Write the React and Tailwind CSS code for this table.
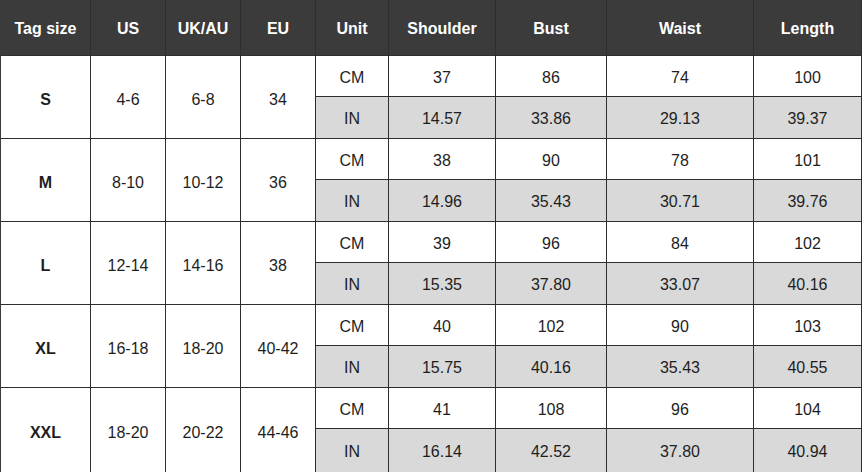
import React from "react";

const headers = ["Tag size", "US", "UK/AU", "EU", "Unit", "Shoulder", "Bust", "Waist", "Length"];

const sizes = [
    {tag: "S", us: "4-6", uk: "6-8", eu: "34", cm: ["37", "86", "74", "100"], inch: ["14.57", "33.86", "29.13", "39.37"]},
    {tag: "M", us: "8-10", uk: "10-12", eu: "36", cm: ["38", "90", "78", "101"], inch: ["14.96", "35.43", "30.71", "39.76"]},
    {tag: "L", us: "12-14", uk: "14-16", eu: "38", cm: ["39", "96", "84", "102"], inch: ["15.35", "37.80", "33.07", "40.16"]},
    {tag: "XL", us: "16-18", uk: "18-20", eu: "40-42", cm: ["40", "102", "90", "103"], inch: ["15.75", "40.16", "35.43", "40.55"]},
    {tag: "XXL", us: "18-20", uk: "20-22", eu: "44-46", cm: ["41", "108", "96", "104"], inch: ["16.14", "42.52", "37.80", "40.94"]},
];

const cell = "flex items-center justify-center border-r border-b border-[#2e2e2e]";

const App = () => {
    return (
        <div className="w-[864px] h-[472px] overflow-hidden bg-white" style={{fontFamily: '"Liberation Sans", Arial, sans-serif'}}>
            <div className="grid w-[862px] border-l border-[#3a3a3a] grid-cols-[90px_75px_75px_75px_73px_107px_111px_147px_108px] grid-rows-[56px_41px_42px_41px_42px_41px_42px_41px_42px_41px_44px] text-[16px] text-[#1e1e1e]">
                {/* header */}
                {headers.map(h => (
                    <div key={h} className={`${cell} bg-[#3b3b3b] text-white font-bold pt-[2px]`}>{h}</div>
                ))}

                {sizes.map(s => (
                    <React.Fragment key={s.tag}>
                        <div className={`${cell} row-span-2 font-bold pt-[5px]`}>{s.tag}</div>
                        <div className={`${cell} row-span-2 pt-[5px]`}>{s.us}</div>
                        <div className={`${cell} row-span-2 pt-[5px]`}>{s.uk}</div>
                        <div className={`${cell} row-span-2 pt-[5px]`}>{s.eu}</div>
                        <div className={`${cell} pt-[3px]`}>CM</div>
                        {s.cm.map((v, i) => (
                            <div key={"c" + i} className={`${cell} pt-[3px]`}>{v}</div>
                        ))}
                        <div className={`${cell} bg-[#d9d9d9] pt-[3px]`}>IN</div>
                        {s.inch.map((v, i) => (
                            <div key={"i" + i} className={`${cell} bg-[#d9d9d9] pt-[3px]`}>{v}</div>
                        ))}
                    </React.Fragment>
                ))}
            </div>
        </div>
    );
};

export default App;
